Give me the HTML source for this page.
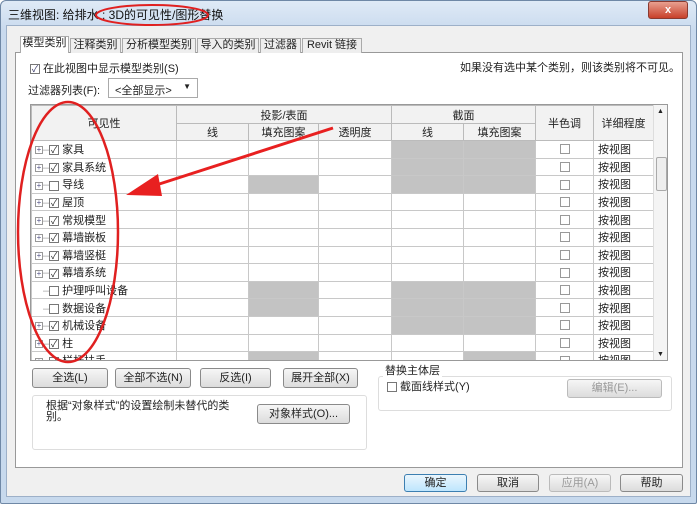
<!DOCTYPE html>
<html><head><meta charset="utf-8"><style>
*{box-sizing:border-box;margin:0;padding:0}
body{width:700px;height:507px;background:#fff;font-family:"Liberation Sans","Noto Sans CJK SC",sans-serif;font-size:11px;color:#222;position:relative;overflow:hidden}
.abs{position:absolute}
#win{left:0;top:0;width:697px;height:504px;border:1px solid #6f88a6;border-radius:6px 6px 2px 2px;background:linear-gradient(#dfeaf6,#c9daee 30px,#c7d9ed)}
#body{left:6px;top:25px;width:685px;height:472px;background:#f0f0f0;border:1px solid #9db0c8}
#panel{left:15px;top:52px;width:668px;height:416px;background:#fff;border:1px solid #999}
.tab{top:38px;height:15px;border:1px solid #aaa;border-bottom:none;background:#eee;font-size:11px;line-height:13px;text-align:center}
.btn{border:1px solid #8a8a8a;border-radius:3px;background:linear-gradient(#f6f6f6,#dcdcdc);text-align:center;font-size:11px}
table{border-collapse:collapse;table-layout:fixed}
td{border:1px solid #c8c8c8;height:17.6px;font-size:11px;padding:0;white-space:nowrap;overflow:hidden}
th{border:1px solid #bbb;background:#f2f2f2;font-weight:normal;font-size:11px}
.g{background:#c3c3c3}
.cb{display:inline-block;width:10px;height:10px;border:1px solid #777;background:#fff;vertical-align:middle;font-size:9px;line-height:8px;text-align:center}
.pl{display:inline-block;width:8px;height:8px;border:1px solid #999;font-size:8px;line-height:6px;text-align:center;color:#558;vertical-align:middle;margin-left:3px}
</style></head><body>
<div id="win" class="abs"></div>
<div class="abs" style="left:8px;top:6px;font-size:12px;color:#111">三维视图: 给排水 : 3D的可见性/图形替换</div>
<div class="abs" style="left:648px;top:1px;width:40px;height:18px;border:1px solid #8a3a30;border-radius:3px;background:linear-gradient(#e8a090,#c8402a);color:#fff;text-align:center;font-weight:bold;line-height:16px">x</div>
<div id="body" class="abs"></div>
<div id="panel" class="abs"></div>
<div class="abs tab" style="left:20px;top:36px;width:49px;height:17px;background:#fff">模型类别</div>
<div class="abs tab" style="left:70px;width:51px">注释类别</div>
<div class="abs tab" style="left:122px;width:74px">分析模型类别</div>
<div class="abs tab" style="left:197px;width:62px">导入的类别</div>
<div class="abs tab" style="left:260px;width:41px">过滤器</div>
<div class="abs tab" style="left:302px;width:60px">Revit 链接</div>
<div class="abs" style="left:30px;top:60px"><span class="cb" style="color:#336">✓</span> 在此视图中显示模型类别(S)</div>
<div class="abs" style="left:460px;top:59px">如果没有选中某个类别，则该类别将不可见。</div>
<div class="abs" style="left:28px;top:82px">过滤器列表(F):</div>
<div class="abs" style="left:108px;top:78px;width:90px;height:20px;border:1px solid #aaa;background:#fff;padding:3px 6px">&lt;全部显示&gt;<span style="position:absolute;right:6px;top:3px;font-size:8px">▼</span></div>
<div class="abs" style="left:30px;top:104px;width:638px;height:257px;overflow:hidden;border:1px solid #999;background:#fff">
<table>
<colgroup><col style="width:145px"><col style="width:72px"><col style="width:70px"><col style="width:73px"><col style="width:72px"><col style="width:72px"><col style="width:58px"><col style="width:60px"></colgroup>
<tr style="height:18px"><th rowspan="2">可见性</th><th colspan="3">投影/表面</th><th colspan="2">截面</th><th rowspan="2">半色调</th><th rowspan="2">详细程度</th></tr>
<tr style="height:17px"><th>线</th><th>填充图案</th><th>透明度</th><th>线</th><th>填充图案</th></tr>
<tbody id="tb"></tbody>
</table>
<div class="abs" style="left:622px;top:0;width:15px;height:256px;background:#f4f4f4;border-left:1px solid #ddd">
<div class="abs" style="left:3px;top:3px;font-size:7px">▲</div>
<div class="abs" style="left:2px;top:52px;width:11px;height:34px;border:1px solid #aaa;border-radius:2px;background:#eee"></div>
<div class="abs" style="left:3px;bottom:3px;font-size:7px">▼</div></div>
</div>
<div class="abs btn" style="left:32px;top:368px;width:76px;height:20px;line-height:18px">全选(L)</div>
<div class="abs btn" style="left:115px;top:368px;width:76px;height:20px;line-height:18px">全部不选(N)</div>
<div class="abs btn" style="left:200px;top:368px;width:71px;height:20px;line-height:18px">反选(I)</div>
<div class="abs btn" style="left:283px;top:368px;width:75px;height:20px;line-height:18px">展开全部(X)</div>
<div class="abs" style="left:378px;top:376px;width:294px;height:35px;border:1px solid #ddd;border-radius:3px"></div>
<div class="abs" style="left:383px;top:362px;background:#fff;padding:0 2px">替换主体层</div>
<div class="abs" style="left:387px;top:378px"><span class="cb"></span> 截面线样式(Y)</div>
<div class="abs btn" style="left:567px;top:379px;width:95px;height:19px;line-height:17px;color:#999;border-color:#bbb">编辑(E)...</div>
<div class="abs" style="left:32px;top:395px;width:335px;height:55px;border:1px solid #ddd;border-radius:3px"></div>
<div class="abs" style="left:46px;top:401px;line-height:11px;width:190px">根据“对象样式”的设置绘制未替代的类别。</div>
<div class="abs btn" style="left:257px;top:404px;width:93px;height:20px;line-height:18px">对象样式(O)...</div>
<div class="abs btn" style="left:404px;top:474px;width:63px;height:18px;line-height:16px;border-color:#3c7fb1;background:linear-gradient(#eaf6fd,#bee6fd)">确定</div>
<div class="abs btn" style="left:477px;top:474px;width:62px;height:18px;line-height:16px">取消</div>
<div class="abs btn" style="left:549px;top:474px;width:62px;height:18px;line-height:16px;color:#999;border-color:#bbb">应用(A)</div>
<div class="abs btn" style="left:620px;top:474px;width:63px;height:18px;line-height:16px">帮助</div>
<svg class="abs" style="left:0;top:0" width="700" height="507">
<ellipse cx="152" cy="15" rx="56" ry="10" fill="none" stroke="#e02020" stroke-width="2"/>
<ellipse cx="68" cy="232" rx="50" ry="130" fill="none" stroke="#e02020" stroke-width="2.5"/>
<line x1="333" y1="128" x2="150" y2="187" stroke="#e82020" stroke-width="3"/>
<polygon points="126,195 158,174 162,196" fill="#e82020"/>
</svg>
<script>
var rows=[["家具",1,1,[4,5],1],["家具系统",1,1,[4,5],1],["导线",0,0,[2,4,5],1],["屋顶",1,1,[],1],["常规模型",1,1,[],1],["幕墙嵌板",1,1,[],1],["幕墙竖梃",1,1,[],1],["幕墙系统",1,1,[],1],["护理呼叫设备",0,0,[2,4,5],0],["数据设备",0,0,[2,4,5],0],["机械设备",1,1,[4,5],1],["柱",1,1,[],1],["栏杆扶手",1,1,[2,5],1]];
var h="";rows.forEach(function(r){h+="<tr><td>"+(r[4]?"<span class='pl'>+</span>":"<span style='display:inline-block;width:11px'></span>")+"<span style='color:#aaa'>–</span><span class='cb'>"+(r[1]?"✓":"")+"</span> "+r[0]+"</td>";
for(var i=1;i<=5;i++)h+="<td"+(r[3].indexOf(i)>=0?" class='g'":"")+"></td>";
h+="<td style='text-align:center'><span class='cb' style='border-color:#999'></span></td><td style='padding-left:4px'>按视图</td></tr>";});
document.getElementById("tb").innerHTML=h;
</script>
</body></html>
